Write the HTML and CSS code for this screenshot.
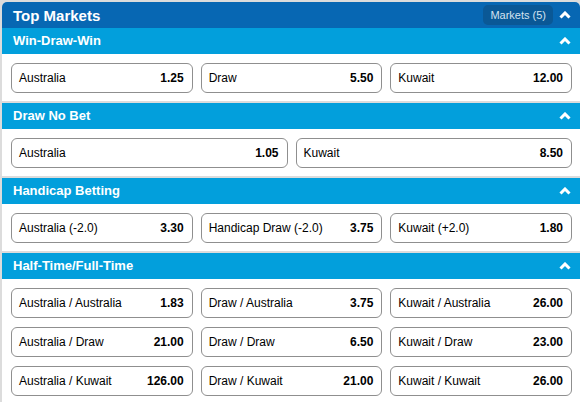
FILE: index.html
```html
<!DOCTYPE html>
<html lang="en">
<head>
  <meta charset="UTF-8">
  <title>Top Markets</title>
  <link rel="stylesheet" href="styles.css">
</head>
<body>
  <div class="panel">
    <div class="panel-head">
      <span class="panel-title">Top Markets</span>
      <span class="markets-count">Markets (5)</span>
      <svg class="caret" width="12" height="8" viewBox="0 0 12 8"><polyline points="1.5,6.5 6,2 10.5,6.5" /></svg>
    </div>

    <div class="market">
      <div class="market-head">
        <span>Win-Draw-Win</span>
        <svg class="caret" width="12" height="8" viewBox="0 0 12 8"><polyline points="1.5,6.5 6,2 10.5,6.5" /></svg>
      </div>
      <div class="odds cols-3">
        <div class="bet"><span>Australia</span><b>1.25</b></div>
        <div class="bet"><span>Draw</span><b>5.50</b></div>
        <div class="bet"><span>Kuwait</span><b>12.00</b></div>
      </div>
    </div>

    <div class="market">
      <div class="market-head">
        <span>Draw No Bet</span>
        <svg class="caret" width="12" height="8" viewBox="0 0 12 8"><polyline points="1.5,6.5 6,2 10.5,6.5" /></svg>
      </div>
      <div class="odds cols-2">
        <div class="bet"><span>Australia</span><b>1.05</b></div>
        <div class="bet"><span>Kuwait</span><b>8.50</b></div>
      </div>
    </div>

    <div class="market">
      <div class="market-head">
        <span>Handicap Betting</span>
        <svg class="caret" width="12" height="8" viewBox="0 0 12 8"><polyline points="1.5,6.5 6,2 10.5,6.5" /></svg>
      </div>
      <div class="odds cols-3">
        <div class="bet"><span>Australia (-2.0)</span><b>3.30</b></div>
        <div class="bet"><span>Handicap Draw (-2.0)</span><b>3.75</b></div>
        <div class="bet"><span>Kuwait (+2.0)</span><b>1.80</b></div>
      </div>
    </div>

    <div class="market">
      <div class="market-head">
        <span>Half-Time/Full-Time</span>
        <svg class="caret" width="12" height="8" viewBox="0 0 12 8"><polyline points="1.5,6.5 6,2 10.5,6.5" /></svg>
      </div>
      <div class="odds cols-3">
        <div class="bet"><span>Australia / Australia</span><b>1.83</b></div>
        <div class="bet"><span>Draw / Australia</span><b>3.75</b></div>
        <div class="bet"><span>Kuwait / Australia</span><b>26.00</b></div>
        <div class="bet"><span>Australia / Draw</span><b>21.00</b></div>
        <div class="bet"><span>Draw / Draw</span><b>6.50</b></div>
        <div class="bet"><span>Kuwait / Draw</span><b>23.00</b></div>
        <div class="bet"><span>Australia / Kuwait</span><b>126.00</b></div>
        <div class="bet"><span>Draw / Kuwait</span><b>21.00</b></div>
        <div class="bet"><span>Kuwait / Kuwait</span><b>26.00</b></div>
      </div>
    </div>
  </div>
</body>
</html>
```

FILE: styles.css
```css
body {
  margin: 0;
  background-color: #dcdcdc;
  font-family: Arial, "Liberation Sans", sans-serif;
  color: #111;
}
.panel {
  margin: 2px 0 0 2px;
  background-color: #fff;
  border-radius: 5px 5px 0 0;
  overflow: hidden;
}
.panel-head {
  display: flex;
  align-items: center;
  height: 26px;
  padding: 0 9px 0 11px;
  background-color: #0767b3;
  color: #fff;
}
.panel-title {
  flex: 1;
  font-size: 15px;
  font-weight: bold;
}
.markets-count {
  font-size: 11px;
  color: #d4e2f0;
  background-color: #0a5896;
  border-radius: 5px;
  padding: 4px 7px;
  margin-right: 6px;
}
.caret polyline {
  fill: none;
  stroke: #fff;
  stroke-width: 3;
}
.market + .market {
  border-top: 2px solid #dcdcdc;
}
.market-head {
  display: flex;
  align-items: center;
  justify-content: space-between;
  box-sizing: border-box;
  height: 26px;
  padding: 0 9px 1px 11px;
  background-color: #029fdc;
  color: #fff;
  font-size: 13px;
  font-weight: bold;
}
.odds {
  display: grid;
  gap: 9px 8px;
  padding: 9px 8px 8px 9px;
}
.cols-3 {
  grid-template-columns: repeat(3, 1fr);
}
.cols-2 {
  grid-template-columns: repeat(2, 1fr);
}
.bet {
  display: flex;
  align-items: center;
  justify-content: space-between;
  box-sizing: border-box;
  height: 30px;
  padding: 0 8px 0 7px;
  border: 1px solid #8f8f8f;
  border-radius: 6px;
  font-size: 12px;
  color: #000;
}
.bet b {
  font-weight: bold;
}
```
